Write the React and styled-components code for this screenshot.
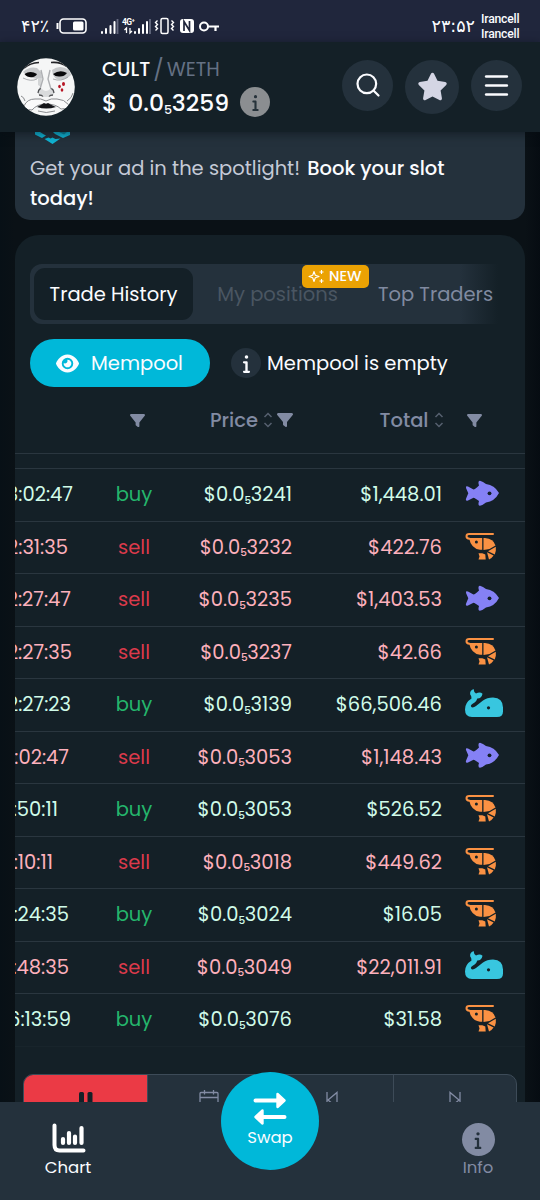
import React from "react";
import styled, { createGlobalStyle, css } from "styled-components";
import { FaEye, FaFilter, FaStar, FaInfo } from "react-icons/fa6";
import { Search, Menu } from "lucide-react";

const c = {
  status: "#20263c",
  panel: "#142027",
  raised: "#24313c",
  line: "#2a363f",
  muted: "#828ba3",
  cyan: "#00b8d9",
  white: "#fbfcff",
};

const GlobalStyle = createGlobalStyle`
  * { box-sizing: border-box; }
  body { margin: 0; background: #0a1117; font-family: Poppins, Inter, "Liberation Sans", sans-serif; }
  button { font: inherit; border: 0; padding: 0; cursor: pointer; color: inherit; }
`;

const Screen = styled.div`
  width: 540px;
  height: 1200px;
  display: flex;
  flex-direction: column;
  overflow: hidden;
  background: linear-gradient(90deg, #071016 0, #0a1116 15px, #0a1116 525px, #060c12 540px);
  color: ${c.white};
  font-size: 19.5px;
`;

const Txt = styled.span`
  white-space: pre;
  ${(p) => p.$size && css`font-size: ${p.$size}px;`}
  ${(p) => p.$line && css`line-height: ${p.$line}px;`}
  ${(p) => p.$weight && css`font-weight: ${p.$weight};`}
  ${(p) => p.$color && css`color: ${p.$color};`}
`;

/* status bar */
const StatusBar = styled.div`
  flex: none;
  height: 42px;
  padding: 10px 21px 0 21px;
  display: flex;
  justify-content: space-between;
  background: ${c.status};
`;
const StatusGroup = styled.div`
  display: flex;
  align-items: center;
  height: 32px;
  gap: ${(p) => p.$gap}px;
`;
const Persian = styled.span`
  font: 17.5px/32px "DejaVu Sans", sans-serif;
  letter-spacing: -1px;
`;
const Carriers = styled.div`
  padding-top: 2px;
  font: 500 12.2px/15.500px Roboto, sans-serif;
  width: 38px;
  letter-spacing: -0.2px;
`;

/* app header */
const Header = styled.header`
  flex: none;
  height: 90px;
  padding-left: 17px;
  padding-right: 18px;
  display: flex;
  align-items: center;
  background: ${c.panel};
  box-shadow: 0 2px 9px rgba(5, 12, 18, 0.5);
  z-index: 1;
`;
const TokenInfo = styled.div`
  margin-left: 27px;
  flex: 1;
`;
const PairLine = styled.div`
  display: flex;
  height: 30px;
  align-items: center;
  line-height: 30px;
  gap: 3px;
`;
const PriceLine = styled.div`
  display: flex;
  align-items: center;
  height: 34px;
  font-size: 23.5px;
  font-weight: 500;
  gap: 11px;
`;
const InfoDot = styled.span`
  width: ${(p) => p.$size}px;
  height: ${(p) => p.$size}px;
  border-radius: 50%;
  display: grid;
  place-items: center;
  background: ${(p) => p.$bg};
  color: ${(p) => p.$fg};
  svg { width: ${(p) => p.$icon}px; height: ${(p) => p.$icon}px; }
`;
const Sub = styled.span`
  font-size: 0.54em;
  font-weight: 500;
  line-height: 1;
  letter-spacing: -0.5px;
  position: relative;
  top: 0.26em;
`;
const HeaderButtons = styled.div`
  display: flex;
  align-items: center;
  gap: 12px;
  margin-top: -4px;
`;
const RoundButton = styled.button`
  width: ${(p) => p.$size}px;
  height: ${(p) => p.$size}px;
  border-radius: 50%;
  display: grid;
  place-items: center;
  background: ${c.raised};
  color: ${(p) => p.$fg || c.white};
  margin-top: ${(p) => p.$drop || 0}px;
`;

/* scroll area */
const Main = styled.main`
  flex: 1;
  min-height: 0;
  overflow: hidden;
  padding: 0 15px;
`;
const AdCard = styled.section`
  height: 88px;
  padding-left: 15px;
  border-radius: 0 0 15px 15px;
  background: ${c.raised};
  line-height: 29.5px;
  > svg { display: block; margin-left: 5px; margin-bottom: 10px; }
`;
const AdLink = styled.span`
  margin-left: 2px;
  font-weight: 500;
`;
const Panel = styled.section`
  margin-top: 15px;
  height: 900px;
  border-radius: 24px 24px 0 0;
  background: ${c.panel};
  padding-top: 29px;
`;
const Tabs = styled.div`
  height: 60px;
  margin-left: 15px;
  margin-right: 25px;
  padding: 4px;
  display: flex;
  position: relative;
  border-radius: 12px 0 0 12px;
  background: linear-gradient(90deg, ${c.raised} 430px, ${c.panel} 468px);
`;
const Tab = styled.button`
  flex: none;
  height: 52px;
  width: ${(p) => p.$w}px;
  border-radius: 11px;
  text-align: center;
  background: ${(p) => (p.$active ? c.panel : "transparent")};
  color: ${(p) => p.$fg};
`;
const NewBadge = styled.span`
  position: absolute;
  left: 272px;
  top: 1px;
  width: 67px;
  height: 23px;
  border-radius: 5px;
  background: #eba203;
  display: flex;
  align-items: center;
  padding-left: 6px;
  gap: 4px;
`;
const MempoolRow = styled.div`
  display: flex;
  align-items: center;
  height: 48px;
  margin: 15px 0 0 15px;
`;
const MempoolButton = styled.button`
  width: 180px;
  height: 48px;
  border-radius: 24px;
  background: ${c.cyan};
  color: ${c.white};
  display: flex;
  align-items: center;
  padding-left: 26px;
  gap: 12px;
  margin-right: 21px;
`;

/* trades */
const columns = css`
  display: grid;
  grid-template-columns: 88px 62px 127px 150px 83px;
  align-items: center;
`;
const TableHead = styled.div`
  ${columns}
  height: 67px;
  border-bottom: 1.5px solid ${c.line};
  color: ${c.muted};
  font-weight: 500;
`;
const HeadCell = styled.div`
  display: flex;
  align-items: center;
  height: 66px;
  justify-content: ${(p) => p.$align || "flex-end"};
  padding-left: ${(p) => p.$pl || 0}px;
  margin-right: ${(p) => p.$mr || 0}px;
  gap: ${(p) => p.$gap || 5}px;
`;
const Spacer = styled.div`
  height: 15px;
  border-bottom: 1.5px solid ${c.line};
`;
const Row = styled.div`
  ${columns}
  height: 52.5px;
  padding-top: 1px;
  border-bottom: 1.5px solid ${(p) => (p.$last ? "#18242b" : c.line)};
  color: ${(p) => (p.$buy ? "#d0fbe9" : "#fdb0bc")};
`;
const Time = styled.span`
  display: flex;
  justify-content: flex-end;
  overflow: hidden;
  white-space: nowrap;
  line-height: 30px;
  width: ${(p) => p.$w}px;
`;
const Side = styled.span`
  text-align: center;
  line-height: 30px;
  color: ${(p) => (p.$buy ? "#24b56c" : "#dc3a4b")};
`;
const Num = styled.span`
  text-align: right;
  white-space: nowrap;
  line-height: 30px;
`;
const Animal = styled.span`
  padding-left: 23px;
  padding-bottom: 4px;
  height: 42px;
  display: flex;
  align-items: center;
`;

/* pager */
const Pager = styled.div`
  margin: 27.5px 8px 0;
  height: 54px;
  display: grid;
  grid-template-columns: 124px 123px 123px 1fr;
  border: 1.5px solid #3d4b58;
  border-radius: 10px;
  overflow: hidden;
  background: ${c.raised};
`;
const PagerCell = styled.div`
  display: flex;
  justify-content: center;
  padding-top: ${(p) => p.$top}px;
  background: ${(p) => (p.$stop ? "#eb3a45" : "transparent")};
  color: ${c.muted};
  border-right: ${(p) => (p.$end ? 0 : "1px solid #3d4b58")};
`;

/* bottom navigation */
const Nav = styled.nav`
  flex: none;
  height: 98px;
  background: ${c.raised};
  display: flex;
  justify-content: space-between;
  position: relative;
  z-index: 1;
  padding: 0 29px;
`;
const NavItem = styled.button`
  width: ${(p) => p.$w}px;
  display: flex;
  flex-direction: column;
  align-items: center;
  padding-top: 21px;
  background: none;
  color: ${(p) => p.$fg};
`;
const NavIcon = styled.span`
  height: 33px;
  padding-left: 1px;
`;
const SwapButton = styled.button`
  position: absolute;
  left: 221px;
  top: -30px;
  width: 98px;
  height: 98px;
  border-radius: 50%;
  background: ${c.cyan};
  color: ${c.white};
  display: flex;
  flex-direction: column;
  align-items: center;
  padding-top: 20px;
`;

const StatusIcons = () => (
  <svg width="165" height="20" viewBox="0 0 165 20" fill="none">
    <path d="M1.500 7v6" stroke="#fff" strokeWidth="2" />
    <rect x="4" y="3" width="26" height="14" rx="3.500" stroke="#fff" strokeWidth="1.600" />
    <rect x="17" y="5.500" width="10.500" height="9" rx="1.500" fill="#fff" />
    <path d="M46 17v-1M50 17v-4M54.500 17V10M58.500 17V6" stroke="#fff" strokeWidth="2" strokeLinecap="round" />
    <path d="M61.500 18V3" stroke="#666b80" strokeWidth="1.800" />
    <path d="M79 17v-1M83 17v-4M87 17V9M91 17V6" stroke="#fff" strokeWidth="2" strokeLinecap="round" />
    <path d="M94 18V3" stroke="#666b80" strokeWidth="1.800" />
    <text x="66" y="9" fill="#fff" fontFamily="Roboto" fontWeight="700" fontSize="8.500" textLength="13">4G⁺</text>
    <path d="M70.500 17v-5l-2 2M74 12v5l2-2" stroke="#fff" strokeWidth="1.300" />
    <rect x="105" y="2.500" width="7" height="15" rx="1.500" stroke="#fff" strokeWidth="1.500" />
    <path d="M101.500 4.500l-2 2 2 2-2 2 2 2-2 2M115.500 4.500l2 2-2 2 2 2-2 2 2 2" stroke="#fff" strokeWidth="1.400" />
    <rect x="124" y="3" width="14" height="14" rx="3" fill="#fff" />
    <path d="M128 15V5.500l5.500 9V5" stroke={c.status} strokeWidth="1.700" />
    <circle cx="148" cy="10.500" r="4" stroke="#fff" strokeWidth="2" />
    <path d="M152 10.500H163M159.500 11v4" stroke="#fff" strokeWidth="2.200" />
  </svg>
);

const Avatar = () => (
  <svg width="58" height="58" viewBox="0 0 58 58">
    <defs>
      <clipPath id="face"><circle cx="29" cy="29" r="28.800" /></clipPath>
    </defs>
    <g clipPath="url(#face)">
      <rect width="58" height="58" fill="#f5f6f6" />
      <path d="M6 14q6-6 14-4l4 4 1 6-4 1q-9-1-15-7zM35 12q8-6 17 0l2 5q-6 6-14 4-4-1-5-9z" fill="#c6c8ca" />
      <path d="M21 20h4l-1 9-3-2z" fill="#d3d5d6" />
      <path d="M24 12l2 9-3 10M33 12l-2 9 3 10" stroke="#aeb0b3" strokeWidth="1.400" fill="none" />
      <path d="M7.500 16q6-4 12.500 0-1 3-6 3.200-4 0-6.500-3.200zM36 16q7-5 14-1-3 4-8 3.500-4 0-6-2.500z" fill="#08080a" />
      <path d="M7 10q6-5 15-5.500M34 4.500q9-1 16 4" stroke="#232427" strokeWidth="1.700" fill="none" />
      <path d="M6 20q8 4 14 1M36 21q8 3 15-2" stroke="#999c9f" strokeWidth=".8" fill="none" />
      <path d="M21 36q0-5 4-5 4 4 8 0 4 0 4 5-3 3-8 3t-8-3z" fill="#d9dbdc" />
      <path d="M21 35q1-5 3-4M37 35q-1-5-3-4M22 37q3 0 4 1.500M36 37q-3 0-4 1.500" stroke="#4d4f52" strokeWidth="1.300" fill="none" />
      <path d="M7 48q3-7 11-7 6-1 11 2 5-3 11-2 7 0 12 6-3 5-8 4-5-5-15-5-9 0-14 6-5 1-8-4z" fill="#fafafa" stroke="#8a8c8f" strokeWidth="1" />
      <path d="M20 49q4-2 7-4l2 1 2-1q3 2 8 4-10 3-19 0z" fill="#141518" />
      <path d="M21 53q8 3 17 0M50 43q5-3 6-8M4 38q3 1 4 5" stroke="#898b8e" fill="none" />
      <g fill="#b71625"><ellipse cx="46.500" cy="26" rx="1.500" ry="2" /><ellipse cx="42.500" cy="28.500" rx="1.300" ry="1.800" /><ellipse cx="45" cy="32" rx="1.300" ry="1.700" /></g>
    </g>
  </svg>
);

const AdLogo = () => (
  <svg width="36" height="12" viewBox="0 0 36 12">
    <path d="M0 0h5l4 2.500 2 1L7 6 0 2.500zM18 0h17v3l-7 3-8-4zM17.500 5.500l3 1.500 5-.5-8 5.500-8-5 4-1.500 2 1z" fill="#10b4d4" />
    <path d="M24 0l5 2.500L32 0z" fill="#0a7f98" />
  </svg>
);

const Sparkles = () => (
  <svg width="17" height="15" viewBox="0 0 17 15" fill="none" stroke="#fff" strokeWidth="1.100" strokeLinejoin="round">
    <path d="M6 2.500l1.300 3.700L11 7.500 7.300 8.800 6 12.500 4.700 8.800 1 7.500l3.700-1.300z" />
    <path d="M13.500 1v4M11.500 3h4M13.500 10v4M11.500 12h4" />
  </svg>
);

const Sort = () => (
  <svg width="10" height="16" viewBox="0 0 10 16" fill="none" stroke="#56606f" strokeWidth="1.500">
    <path d="M1.500 5L5 1.500 8.500 5M1.500 11L5 14.500 8.500 11" />
  </svg>
);

const Fish = () => (
  <svg width="35" height="27" viewBox="0 0 35 27">
    <path
      d="M1.200 8.500Q0 5.500 3 6.500L8.500 9.500Q10 9.300 14 5.500 12.500 1 15 .8q3 1 6 3.200Q29.500 5 34 13q-4.500 8.500-13 9.500-3 2.500-6 3.200-2.500 0-1-4.700-4-3-5.500-3.300L3 20.500q-3 .8-1.800-2.200L3.300 13.200z"
      fill="#8581f5"
    />
    <circle cx="24.500" cy="13.300" r="1.900" fill={c.panel} />
  </svg>
);

const Shrimp = () => (
  <svg width="32" height="28" viewBox="0 0 32 28" fill="#fa9143">
    <path d="M28 2H4.200Q1.500 2 1.500 4.300T4.500 6.800" fill="none" stroke="#fa9143" strokeWidth="2" strokeLinecap="round" />
    <path d="M4 6h13.200v11.800H15Q6 16.500 4 6z" />
    <path d="M18.500 6H20q8.500.500 10.500 7.500l-6 3.500-6 1z" />
    <path d="M30.800 14.800v4l-1 3.600-6.800-3.200z" />
    <path d="M22 20.300l6.600 3.200q-2 3-4.600 4.100z" />
    <path d="M13.500 21.300h3.800l3 1.200.4 5h-7.200l1-3z" />
    <circle cx="11.400" cy="10" r="1.500" fill={c.panel} />
  </svg>
);

const Whale = () => (
  <svg width="38" height="29" viewBox="0 0 38 29" fill="#38c6df">
    <path d="M6.500 9.500Q6.500 6.500 5.200 5.600 4.400 1.500 8.600 0 8.800 3.200 11 4.500q4-2.300 6.500.2-.7 4.400-5.200 4.900-.6 2.400-2.700 3.900Q5 16 6 17.500q1.500 2 5-.5L18 11.500Q22 8.500 28 8.500q10 .5 10 10v4q0 5.500-6 5.500H7Q0 28 0 20.500 0 13.500 6.500 9.500z" />
    <circle cx="23.500" cy="18.800" r="1.600" fill={c.panel} />
  </svg>
);

const ChartIcon = () => (
  <svg width="34" height="30" viewBox="0 0 34 30" fill="none" stroke="#fff" strokeLinecap="round">
    <path d="M2.500 2.500V22q0 5.500 5 5.500h24" strokeWidth="4" />
    <path d="M11 16v4M17 10v10M23 13.500V20M29.500 5v15" strokeWidth="4.200" />
  </svg>
);

const SwapIcon = () => (
  <svg width="34" height="34" viewBox="0 0 34 34" fill="#fff" stroke="#fff" strokeLinecap="round" strokeLinejoin="round">
    <path d="M2.500 8.500H24M10 25h21.500" strokeWidth="4" />
    <path d="M24.500 2l7 6.500-7 6.500zM9.500 18.500l-7 6.500 7 6.500z" strokeWidth="2.400" />
  </svg>
);

const Calendar = () => (
  <svg width="20" height="22" viewBox="0 0 20 22" fill="none" stroke={c.muted} strokeWidth="1.300">
    <path d="M1 21V4.500q0-1 1-1h16q1 0 1 1V21M1 8.500h18M5.500 1v4.500M14.500 1v4.500" />
  </svg>
);
const Skip = ({ next }) => (
  <svg width="12" height="20" viewBox="0 0 12 20" fill="none" stroke={c.muted} strokeWidth="1.300">
    <path d={next ? "M11 1v18M1 18V1.500L10 9l-6 5" : "M1 1v18M11 18V1.500L2 9l6 5"} />
  </svg>
);
const Pause = () => (
  <svg width="14" height="22" viewBox="0 0 14 22" fill={c.panel}>
    <rect x="0" width="5" height="22" rx="1.500" /><rect x="8.500" width="5" height="22" rx="1.500" />
  </svg>
);

const icons = { fish: <Fish />, shrimp: <Shrimp />, whale: <Whale /> };

const trades = [
  ["3:02:47", 58, 1, "3241", "$1,448.01", "fish"],
  ["2:31:35", 53, 0, "3232", "$422.76", "shrimp"],
  ["2:27:47", 56, 0, "3235", "$1,403.53", "fish"],
  ["2:27:35", 57, 0, "3237", "$42.66", "shrimp"],
  ["2:27:23", 56, 1, "3139", "$66,506.46", "whale"],
  [":02:47", 54, 0, "3053", "$1,148.43", "fish"],
  [":50:11", 43, 1, "3053", "$526.52", "shrimp"],
  [":10:11", 38, 0, "3018", "$449.62", "shrimp"],
  [":24:35", 54, 1, "3024", "$16.05", "shrimp"],
  [":48:35", 54, 0, "3049", "$22,011.91", "whale"],
  ["6:13:59", 56, 1, "3076", "$31.58", "shrimp"],
];

export default function App() {
  return (
    <Screen>
      <GlobalStyle />
      <StatusBar>
        <StatusGroup $gap={7}><Persian>۴۲٪</Persian><StatusIcons /></StatusGroup>
        <StatusGroup $gap={6}>
          <Persian>۲۳:۵۲</Persian>
          <Carriers><div>Irancell</div><div>Irancell</div></Carriers>
        </StatusGroup>
      </StatusBar>
      <Header>
        <Avatar />
        <TokenInfo>
          <PairLine>
            <Txt $weight={500}>CULT</Txt>
            <Txt $color="#657184" $size={22}>/</Txt>
            <Txt $color="#657184">WETH</Txt>
          </PairLine>
          <PriceLine>
            <Txt>$</Txt><Txt>0.0<Sub>5</Sub>3259</Txt>
            <InfoDot $size={30} $bg="#8b8e91" $fg="#26323a" $icon={17}><FaInfo /></InfoDot>
          </PriceLine>
        </TokenInfo>
        <HeaderButtons>
          <RoundButton $size={51}><Search size={28} strokeWidth={1.9} /></RoundButton>
          <RoundButton $size={54} $fg="#d4d5e4" $drop={3}><FaStar size={31} /></RoundButton>
          <RoundButton $size={51}><Menu size={31} strokeWidth={2} /></RoundButton>
        </HeaderButtons>
      </Header>
      <Main>
        <AdCard>
          <AdLogo />
          <Txt $color="#c5cad7">Get your ad in the spotlight! </Txt>
          <AdLink>Book your slot</AdLink>
          <br />
          <Txt $weight={500}>today!</Txt>
        </AdCard>
        <Panel>
          <Tabs>
            <Tab $w={159} $active $fg={c.white}><Txt>Trade History</Txt></Tab>
            <Tab $w={169} $fg="#4a5662"><Txt>My positions</Txt></Tab>
            <Tab $w={147} $fg="#808aa0"><Txt>Top Traders</Txt></Tab>
            <NewBadge><Sparkles /><Txt $size={14.5} $weight={500}>NEW</Txt></NewBadge>
          </Tabs>
          <MempoolRow>
            <MempoolButton><FaEye size={23} /><Txt>Mempool</Txt></MempoolButton>
            <InfoDot $size={30} $bg={c.raised} $fg={c.white} $icon={19}><FaInfo /></InfoDot>
            <HeadCell $pl={6}><Txt>Mempool is empty</Txt></HeadCell>
          </MempoolRow>
          <TableHead>
            <span />
            <HeadCell $align="center" $pl={6}><FaFilter size={15} /></HeadCell>
            <HeadCell $mr={-1} $gap={4.5}><Txt>Price</Txt><Sort /><FaFilter size={16} /></HeadCell>
            <HeadCell $mr={-1.5}><Txt>Total</Txt><Sort /></HeadCell>
            <HeadCell $align="flex-start" $pl={25}><FaFilter size={15} /></HeadCell>
          </TableHead>
          <Spacer />
          {trades.map(([time, w, buy, digits, total, animal], i) => (
            <Row key={i} $buy={buy} $last={i === trades.length - 1}>
              <Time $w={w}><Txt>{time}</Txt></Time>
              <Side $buy={buy}>{buy ? "buy" : "sell"}</Side>
              <Num>$0.0<Sub>5</Sub>{digits}</Num>
              <Num>{total}</Num>
              <Animal>{icons[animal]}</Animal>
            </Row>
          ))}
          <Pager>
            <PagerCell $stop $top={17}><Pause /></PagerCell>
            <PagerCell $top={14}><Calendar /></PagerCell>
            <PagerCell $top={16}><Skip /></PagerCell>
            <PagerCell $top={16} $end><Skip next /></PagerCell>
          </Pager>
        </Panel>
      </Main>
      <Nav>
        <NavItem $w={78} $fg={c.white}>
          <NavIcon><ChartIcon /></NavIcon>
          <Txt $size={16.5} $line={24}>Chart</Txt>
        </NavItem>
        <SwapButton><SwapIcon /><Txt $size={16.5} $line={24}>Swap</Txt></SwapButton>
        <NavItem $w={66} $fg={c.muted}>
          <InfoDot $size={33} $bg={c.muted} $fg={c.raised} $icon={18}><FaInfo /></InfoDot>
          <Txt $size={16.5} $line={24}>Info</Txt>
        </NavItem>
      </Nav>
    </Screen>
  );
}
